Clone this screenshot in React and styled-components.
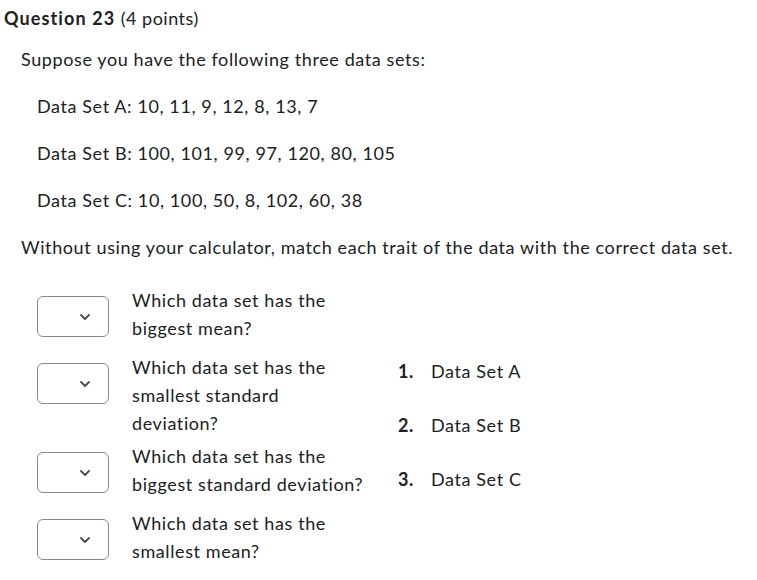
import React from "react";
import styled, { createGlobalStyle } from "styled-components";

const GlobalStyle = createGlobalStyle`
    body {
        margin: 0;
        background: #ffffff;
        font-family: Lato, "Noto Sans", sans-serif;
        font-variant-ligatures: none;
        color: #202122;
    }
`;

const Page = styled.div`
    padding: 4px 0 0 4px;
    width: 757px;
    box-sizing: border-box;
`;

const Title = styled.h2`
    margin: 0;
    font-size: 18px;
    line-height: 28px;
    font-weight: 700;
    letter-spacing: 1.1px;

    span {
        font-weight: 400;
        letter-spacing: 0.5px;
    }
`;

const Body = styled.div`
    padding: 13px 0 0 17px;
`;

const Para = styled.p`
    margin: 0 0 19px;
    font-size: 18px;
    line-height: 28px;
    letter-spacing: 0.6px;
    padding-left: ${props => (props.indent ? "16px" : "0")};
`;

const Matching = styled.div`
    display: flex;
    align-items: center;
    margin-top: 25px;
    padding-left: 16px;
`;

const Questions = styled.div`
    display: flex;
    flex-direction: column;
    gap: 5px;
    width: 363px;
`;

const Row = styled.div`
    display: flex;
    align-items: flex-start;
`;

const SelectBox = styled.div`
    flex: none;
    box-sizing: border-box;
    width: 72px;
    height: 41px;
    margin: 10px 23px 11px 0;
    border: 1px solid #868a8c;
    border-radius: 6px;
    background: #ffffff;
    display: flex;
    align-items: center;
    justify-content: flex-end;
    padding-right: 18px;
`;

const Prompt = styled.div`
    width: 235px;
    font-size: 18px;
    line-height: 28px;
    letter-spacing: 0.6px;
`;

const Answers = styled.ol`
    list-style: none;
    margin: 0 0 8px -2px;
    padding: 0;
    display: flex;
    flex-direction: column;
    gap: 26px;
`;

const Answer = styled.li`
    display: flex;
    font-size: 18px;
    line-height: 28px;
    letter-spacing: 0.6px;

    b {
        width: 33px;
        font-weight: 700;
    }
`;

const Chevron = () => (
    <svg width="10" height="6" viewBox="0 0 10 6" fill="none">
        <path d="M1 1l4 4 4-4" stroke="#494c4e" strokeWidth="1.8" strokeLinecap="round" strokeLinejoin="round" />
    </svg>
);

const questions = [
    "Which data set has the biggest mean?",
    "Which data set has the smallest standard deviation?",
    "Which data set has the biggest standard deviation?",
    "Which data set has the smallest mean?"
];

const answers = ["Data Set A", "Data Set B", "Data Set C"];

export default function App () {
    return (
        <Page>
            <GlobalStyle />
            <Title>
                Question 23 <span>(4 points)</span>
            </Title>
            <Body>
                <Para>Suppose you have the following three data sets:</Para>
                <Para indent>Data Set A: 10, 11, 9, 12, 8, 13, 7</Para>
                <Para indent>Data Set B: 100, 101, 99, 97, 120, 80, 105</Para>
                <Para indent>Data Set C: 10, 100, 50, 8, 102, 60, 38</Para>
                <Para style={{ marginBottom: 0 }}>
                    Without using your calculator, match each trait of the data with the correct data set.
                </Para>
                <Matching>
                    <Questions>
                        {questions.map(q => (
                            <Row key={q}>
                                <SelectBox>
                                    <Chevron />
                                </SelectBox>
                                <Prompt>{q}</Prompt>
                            </Row>
                        ))}
                    </Questions>
                    <Answers>
                        {answers.map((a, i) => (
                            <Answer key={a}>
                                <b>{i + 1}.</b>
                                {a}
                            </Answer>
                        ))}
                    </Answers>
                </Matching>
            </Body>
        </Page>
    );
}
